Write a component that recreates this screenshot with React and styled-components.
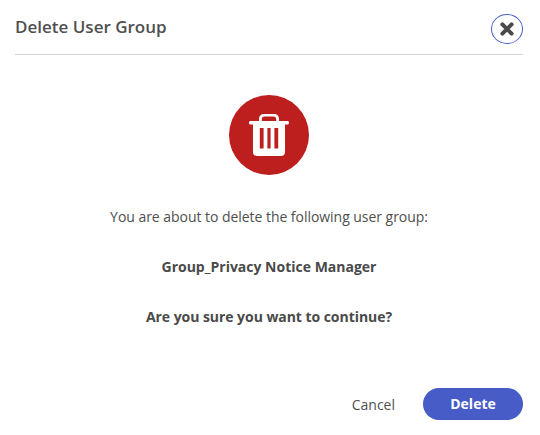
import React from 'react';
import styled, { createGlobalStyle } from 'styled-components';

const Global = createGlobalStyle`
  html, body {
    margin: 0;
    padding: 0;
    background: #ffffff;
  }
  * {
    box-sizing: border-box;
  }
`;

export default function App() {
  return (
    <>
      <Global />
      <Modal>
        <Header>
          <Title>Delete User Group</Title>
          <CloseButton aria-label="Close">
            <svg width="16" height="16" viewBox="0 0 16 16">
              <path d="M3.4 3.4 L12.6 12.6 M12.6 3.4 L3.4 12.6" stroke="#4a4a4a" strokeWidth="4" strokeLinecap="round" />
            </svg>
          </CloseButton>
        </Header>
        <Body>
          <IconCircle>
            <svg width="40" height="42" viewBox="0 0 40 42">
              <path
                fill="#fff"
                fillRule="evenodd"
                d="M1.5 7 H10 V5 C10 2 12 0 15 0 H25 C28 0 30 2 30 5 V7 H38.5 C39.4 7 40 7.6 40 8.5 V9 C40 9.9 39.4 10.5 38.5 10.5 H36 V38 C36 40.5 34.5 42 32 42 H8 C5.5 42 4 40.5 4 38 V10.5 H1.5 C.6 10.5 0 9.9 0 9 V8.5 C0 7.6 .6 7 1.5 7 Z M12.8 7 H27.2 V5.5 C27.2 3.5 26.2 2.6 24.5 2.6 H15.5 C13.8 2.6 12.8 3.5 12.8 5.5 Z M10.8 14 V34.5 H14.6 V14 Z M18.4 14 V34.5 H21.6 V14 Z M25.4 14 V34.5 H29.2 V14 Z"
              />
            </svg>
          </IconCircle>
          <Message>You are about to delete the following user group:</Message>
          <Strong>Group_Privacy Notice Manager</Strong>
          <Strong $tight>Are you sure you want to continue?</Strong>
        </Body>
        <Footer>
          <CancelButton>Cancel</CancelButton>
          <DeleteButton>Delete</DeleteButton>
        </Footer>
      </Modal>
    </>
  );
}

const Modal = styled.div`
  width: 540px;
  height: 435px;
  padding: 0 17px 0 15px;
  background: #fff;
  font-family: 'Open Sans', sans-serif;
  color: #4a4a4a;
  display: flex;
  flex-direction: column;
  overflow: hidden;
`;

const Header = styled.div`
  height: 55px;
  flex: none;
  display: flex;
  align-items: center;
  justify-content: space-between;
  border-bottom: 1px solid #d4d4d4;
  padding-top: 4px;
`;

const Title = styled.h2`
  margin: 0 0 5px;
  font-size: 17px;
  line-height: 23px;
  font-weight: 600;
  color: #4f4f4f;
`;

const CloseButton = styled.button`
  width: 32px;
  height: 30px;
  border: 1.5px solid #4a60cc;
  border-radius: 50%;
  background: #fff;
  padding: 0;
  display: flex;
  align-items: center;
  justify-content: center;
`;

const Body = styled.div`
  display: flex;
  flex-direction: column;
  align-items: center;
  padding-top: 40px;
  flex: none;
`;

const IconCircle = styled.div`
  width: 80px;
  height: 80px;
  border-radius: 50%;
  background: #bd1e1e;
  display: flex;
  align-items: center;
  justify-content: center;
  margin-bottom: 32px;
`;

const Message = styled.p`
  margin: 0 0 31px;
  font-size: 14px;
  line-height: 19px;
  letter-spacing: -0.04px;
  color: #4f4f4f;
`;

const Strong = styled.p`
  margin: 0 0 31px;
  font-size: 14px;
  line-height: 19px;
  font-weight: 700;
  letter-spacing: ${(p) => (p.$tight ? '-0.05px' : '0')};
  color: #4a4a4a;
`;

const Footer = styled.div`
  display: flex;
  justify-content: flex-end;
  align-items: center;
  gap: 28px;
  margin-top: 31px;
`;

const CancelButton = styled.button`
  border: 0;
  background: none;
  padding: 0;
  font: 400 14px 'Open Sans', sans-serif;
  color: #4f4f4f;
`;

const DeleteButton = styled.button`
  width: 100px;
  height: 32px;
  border: 0;
  border-radius: 16px;
  padding: 0 0 2px;
  background: #475cc7;
  color: #fff;
  font: 700 14px 'Open Sans', sans-serif;
`;
